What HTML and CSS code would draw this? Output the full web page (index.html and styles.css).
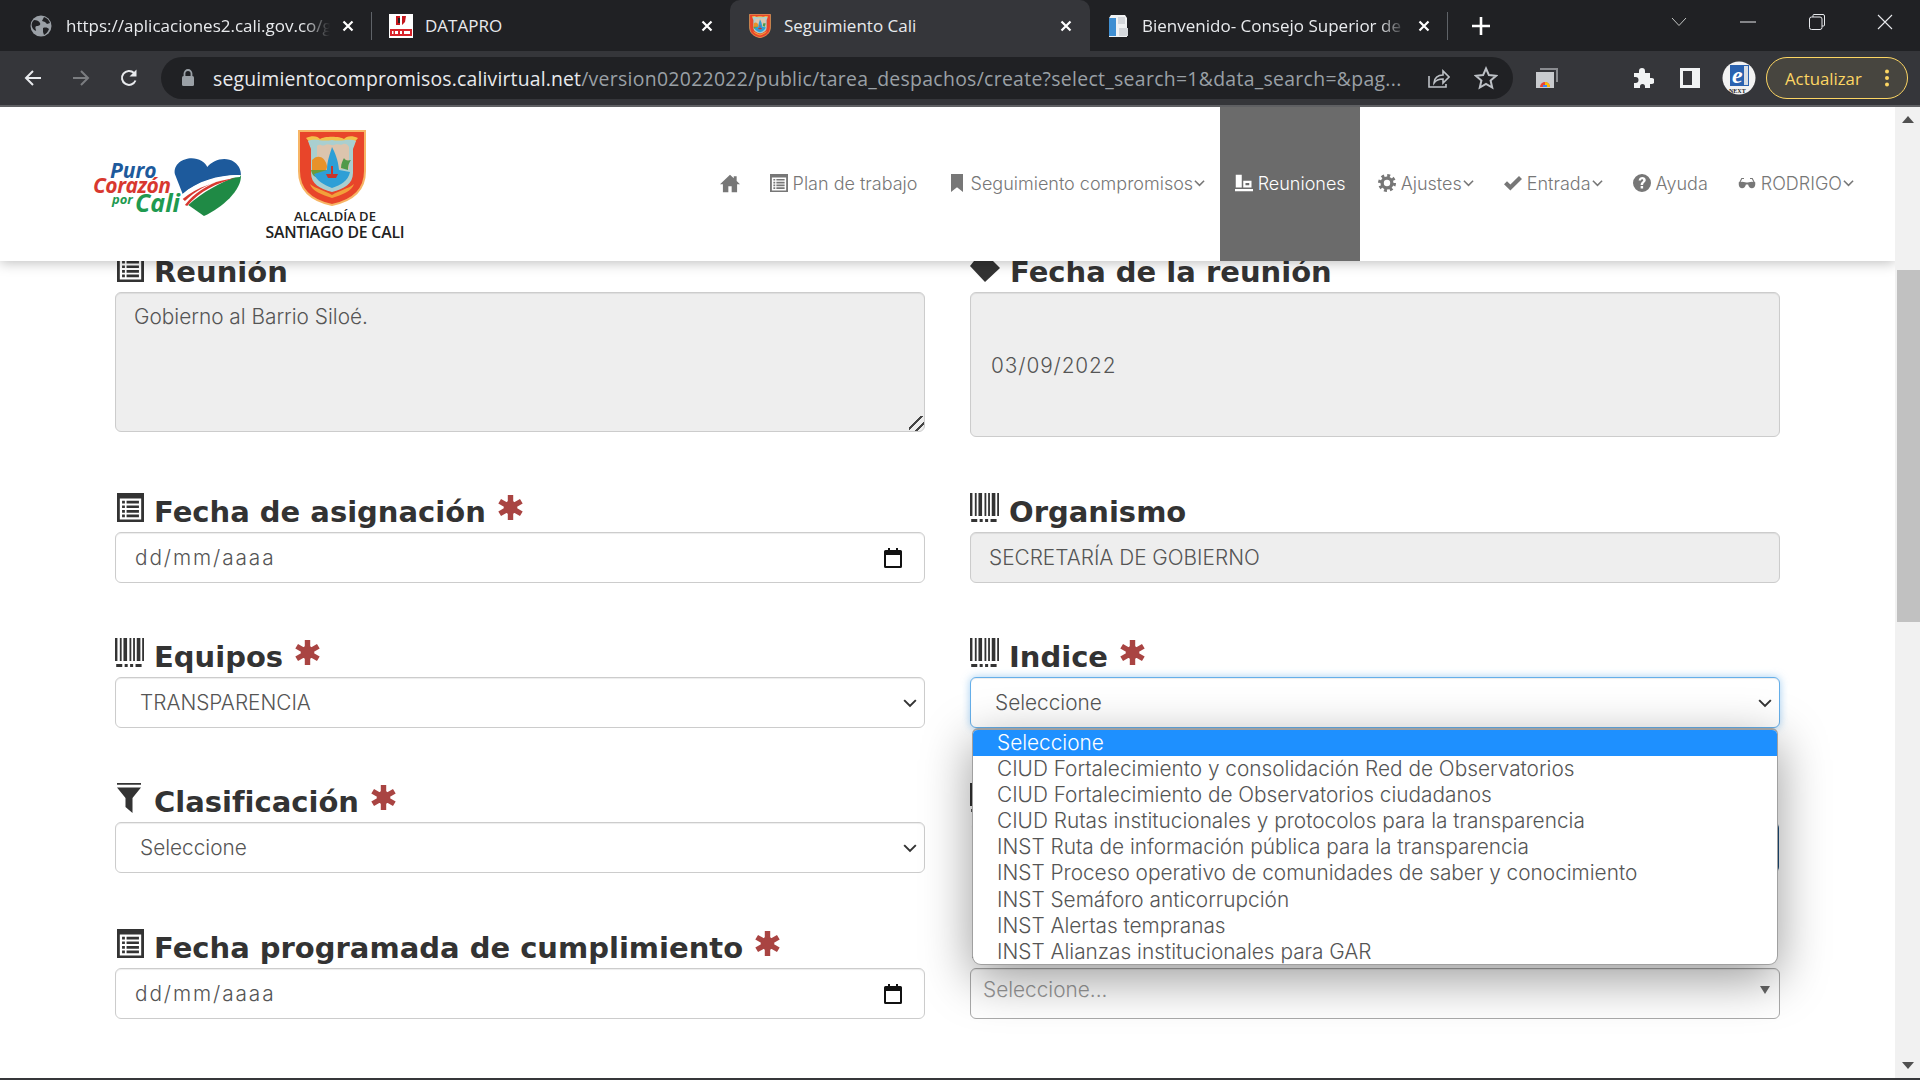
FILE: index.html
```html
<!DOCTYPE html>
<html lang="es">
<head>
    <meta charset="UTF-8">
    <title>Seguimiento Cali</title>
    <link rel="stylesheet" href="styles.css">
</head>
<body>

    <svg class="sprites" aria-hidden="true">
        <symbol id="i-home" viewBox="0 0 24 24"><path d="M12 2 0 13.5h3.5V23H10v-7h4v7h6.500v-9.500H24l-4-3.800V4h-3.500v2.300z"/></symbol>
        <symbol id="i-list" viewBox="0 0 24 24" preserveAspectRatio="none"><path fill-rule="evenodd" d="M0 0h24v24H0zM2.500 4.500V22h19V4.500z"/><path d="M4.500 6.500H7v2.200H4.500zM8.500 6.500h11v2.200h-11zM4.500 10.300H7v2.200H4.500zM8.500 10.300h11v2.200h-11zM4.500 14.100H7v2.200H4.500zM8.500 14.100h11v2.200h-11zM4.500 17.800H7V20H4.500zM8.500 17.800h11V20h-11z"/></symbol>
        <symbol id="i-barcode" viewBox="0 0 24 24"><path d="M0 0h2v19H0zM4 0h1.500v19H4zM7 0h3v19H7zM12 0h1.500v19H12zM15 0h1.500v19H15zM18 0h3v19h-3zM22.500 0H24v19h-1.500zM1 21.500h5V24H1zM8 21.500h2.500V24H8zM12.500 21.500H15V24h-2.500zM17 21.500h5V24h-5z"/></symbol>
        <symbol id="i-filter" viewBox="0 0 24 30"><path d="M0 0h24v1.800H0zM0 4.500h24l-8.500 10.500v15l-7-6v-9z"/></symbol>
        <symbol id="i-tag" viewBox="0 0 30 24"><path d="M0 8 8-2h10l12 12-15 14z"/></symbol>
        <symbol id="i-bookmark" viewBox="0 0 24 24"><path d="M4 0h16v24l-8-6.500L4 24z"/></symbol>
        <symbol id="i-meeting" viewBox="0 0 24 24"><path fill-rule="evenodd" d="M1 1h8v17H1zM11 9h11v9H11zM14 12v3h5v-3zM0 20h24v3H0z"/></symbol>
        <symbol id="i-cog" viewBox="0 0 24 24"><circle cx="12" cy="12" r="6.500" fill="none" stroke="currentColor" stroke-width="4.500"/><circle cx="12" cy="12" r="10" fill="none" stroke="currentColor" stroke-width="4" stroke-dasharray="3.900 3.950"/></symbol>
        <symbol id="i-ok" viewBox="0 0 24 24"><path d="M0 13.500 4 9.500l4.500 4.500L20 2.500l4 4L8.500 22z"/></symbol>
        <symbol id="i-help" viewBox="0 0 24 24"><path fill-rule="evenodd" d="M12 0a12 12 0 1 0 0 24 12 12 0 0 0 0-24zM7.500 8.500C8 2.500 17 2.700 17 8c0 3.500-3.500 3.500-3.500 6.500h-3.300c0-4 3.400-4.400 3.400-6.300 0-1.900-2.900-1.900-3.100.6zM10.200 16h3.300v3.300h-3.300z"/></symbol>
        <symbol id="i-glasses" viewBox="0 0 24 24"><path d="M1 11c3-1 6-1 8.500 0 1.500.6 3.500.6 5 0 2.500-1 5.500-1 8.500 0v3c0 3-2 5-4.500 5S14 17 13.500 14h-3C10 17 8 19 5.500 19S1 17 1 14z"/><path d="M2 12 5 6h3M22 12l-3-6h-3" fill="none" stroke="currentColor" stroke-width="1.500"/></symbol>
        <symbol id="i-star" viewBox="0 0 24 24"><g stroke="currentColor" stroke-width="5.200" stroke-linecap="butt"><path d="M12 0v24M1.600 6 22.400 18M22.400 6 1.600 18"/></g><circle cx="12" cy="12" r="6.500" fill="currentColor"/></symbol>
        <symbol id="i-calendar" viewBox="0 0 18 20"><path fill-rule="evenodd" d="M4 0h2v2h6V0h2v2h2.500A1.500 1.500 0 0 1 18 3.500v15a1.500 1.500 0 0 1-1.500 1.500h-15A1.500 1.500 0 0 1 0 18.500v-15A1.500 1.500 0 0 1 1.500 2H4zM2 7v11h14V7z"/></symbol>
        <symbol id="i-chevron" viewBox="0 0 12 8"><path d="M1 1.500 6 6.500l5-5" fill="none" stroke="currentColor" stroke-width="1.700"/></symbol>
        <symbol id="i-close" viewBox="0 0 12 12"><path d="M1.500 1.500l9 9M10.500 1.500l-9 9" fill="none" stroke="currentColor" stroke-width="2.200"/></symbol>
        <symbol id="i-shield" viewBox="0 0 68 76">
            <path d="M1 1h66v40c0 20-14 30-33 34C15 71 1 61 1 41z" fill="#e8452a" stroke="#f7b565" stroke-width="2"/>
            <path d="M8 8c6-3 12-2 14 1 4-3 20-3 24 0 2-3 8-4 14-1-3 3-4 6-4 9l-44 0c0-3-1-6-4-9z" fill="#f3c04a"/>
            <path d="M10 11c8-3 13 1 24-1 11 2 16-2 24 1l-3 8v24c0 11-9 16-21 19-12-3-21-8-21-19V19z" fill="#a9cfd0"/>
            <path d="M19 16c3-3 5 1 8-1 4-2 6 1 9 0 4-2 7 1 9-1 3-1 5 1 6 3v22H19z" fill="#dcc4ad"/>
            <path d="M14 30c5-6 13-4 15 6 0 6-5 9-15 7z" fill="#e8922a"/>
            <path d="M13 40h17c-1 6-4 8-8 8s-8-2-9-8z" fill="#6b9a3a"/>
            <path d="M43 38c0-5 2-8 3-10 1 2 3 3 7 2-2 3-3 5-3 10z" fill="#4f9a4a"/>
            <path d="M34 17c3 6 6 12 7 23l11 2c-2 9-9 13-18 16-8-3-15-7-18-14l13-4c0-9 3-16 5-23z" fill="#2d9fd6"/>
            <path d="M28 44h12l-2 4h-8zM33 36h2v8h-2z" fill="#c8352a"/>
            <path d="M12 54c6 5 14 6 22 11 8-5 16-6 22-11-2 7-12 11-22 14-10-3-20-7-22-14z" fill="#f2a03a"/>
        </symbol>
    </svg>

    <div class="tab-strip">
        <div class="tab tab-one">
            <svg class="favicon" viewBox="0 0 22 22"><circle cx="11" cy="11" r="10.500" fill="#9aa0a6"/><path d="M4 5c3 0 5 1 6 3s-1 3-3 3-2 2-1 4-3 0-4-3 0-5 2-7zM14 2c3 1 5 3 6 6l-3 1-2-2-3-1zM13 13c3-1 5 0 6 1-1 3-3 5-5 6l-1-3z" fill="#202124"/></svg>
            <span class="tab-title tab-title-fade">https://aplicaciones2.cali.gov.co/g</span>
            <svg class="tab-close"><use href="#i-close"/></svg>
        </div>
        <div class="tab-sep"></div>
        <div class="tab tab-two">
            <svg class="favicon" viewBox="0 0 24 24"><path d="M0 0h24v24H0z" fill="#fff"/><path d="M7 2h4v9H7zM13 2h4l-1 6-3 3z" fill="#c4161c"/><path d="M9 4h2v5H9z" fill="#222"/><path d="M1 15h22v7H1z" fill="#d8232a"/><path d="M3 17h1.500v3H3zM6 17h3v3H6zM11 17h2v3h-2zM15 17h6v3h-6z" fill="#fff"/></svg>
            <span class="tab-title">DATAPRO</span>
            <svg class="tab-close"><use href="#i-close"/></svg>
        </div>
        <div class="tab tab-active">
            <svg class="favicon"><use href="#i-shield"/></svg>
            <span class="tab-title">Seguimiento Cali</span>
            <svg class="tab-close"><use href="#i-close"/></svg>
        </div>
        <div class="tab tab-four">
            <svg class="favicon" viewBox="0 0 24 24"><path d="M5 1h14l2 3v19H3V4z" fill="#f1f3f4"/><path d="M3 4h7v18H3z" fill="#3f8fd2"/><path d="M12 3h7v7h-7zM13 14h9v8h-9z" fill="#d5d8dc"/></svg>
            <span class="tab-title tab-title-fade">Bienvenido- Consejo Superior de</span>
            <svg class="tab-close"><use href="#i-close"/></svg>
        </div>
        <div class="tab-sep"></div>
        <svg class="new-tab" viewBox="0 0 18 18"><path d="M9 0v18M0 9h18" stroke="#fff" stroke-width="2.600"/></svg>
        <div class="window-controls">
            <svg viewBox="0 0 16 10" class="win-chevron"><path d="M1 1l7 7.500L15 1" fill="none" stroke="#c4c7c5" stroke-width="1"/></svg>
            <svg viewBox="0 0 16 16" class="win-min"><path d="M0 8h16" stroke="#e8eaed" stroke-width="1"/></svg>
            <svg viewBox="0 0 16 16" class="win-max"><path d="M4 3V1.500A1 1 0 0 1 5 .500h9a1.500 1.500 0 0 1 1.500 1.500v9a1 1 0 0 1-1 1H13" fill="none" stroke="#e8eaed"/><rect x=".5" y="3" width="12.500" height="12.500" rx="2" fill="none" stroke="#e8eaed"/></svg>
            <svg viewBox="0 0 16 16" class="win-close"><path d="M1 1l14 14M15 1 1 15" stroke="#e8eaed" stroke-width="1.100"/></svg>
        </div>
    </div>

    <div class="toolbar">
        <svg class="nav-btn" viewBox="0 0 20 20"><path d="M18 10H3M10 3l-7 7 7 7" fill="none" stroke="#e8eaed" stroke-width="2"/></svg>
        <svg class="nav-btn" viewBox="0 0 20 20"><path d="M2 10h15M10 3l7 7-7 7" fill="none" stroke="#7b7d80" stroke-width="2"/></svg>
        <svg class="nav-btn" viewBox="0 0 20 20"><path d="M16.500 12.500A7 7 0 1 1 15 5" fill="none" stroke="#e8eaed" stroke-width="2"/><path d="M17.500 1.500v7h-7z" fill="#e8eaed"/></svg>
        <div class="omnibox">
            <svg class="lock" viewBox="0 0 14 18"><path d="M3.500 7V4.500a3.500 3.500 0 0 1 7 0V7" fill="none" stroke="#9aa0a6" stroke-width="1.800"/><rect x="1" y="7" width="12" height="10" rx="1.500" fill="#9aa0a6"/></svg>
            <div class="url"><span class="url-host">seguimientocompromisos.calivirtual.net</span>/version02022022/public/tarea_despachos/create?select_search=1&amp;data_search=&amp;pag...</div>
            <svg class="omni-icon omni-share" viewBox="0 0 24 24"><path d="M3 10v11h17v-3M8 17c0-5 4-8 9-8V5l6 6-6 6v-4c-4 0-7 1-9 4z" fill="none" stroke="#bdc1c6" stroke-width="1.600"/></svg>
            <svg class="omni-icon omni-star" viewBox="0 0 24 24"><path d="M12 2.500l2.900 6.600 7.100.7-5.400 4.700 1.600 7-6.200-3.700-6.200 3.700 1.600-7L2 9.800l7.100-.7z" fill="none" stroke="#bdc1c6" stroke-width="2"/></svg>
        </div>
        <svg class="ext-cast" viewBox="0 0 22 20"><path d="M4 0h18v14h-2V2H4z" fill="#8a8c90"/><path d="M0 4h18v16H0z" fill="#c9cbce"/><path d="M4 19a5 5 0 0 1 10 0z" fill="#ea4335"/><path d="M9 14a5 5 0 0 1 5 5h-3a2 2 0 0 0-2-2z" fill="#fbbc05"/><path d="M7 19h4v-2H7z" fill="#4285f4"/></svg>
        <svg class="ext-puzzle" viewBox="0 0 22 22"><path d="M2 6h5V4a3 3 0 0 1 6 0v2h5v5h1.500a3 3 0 0 1 0 6H18v4h-5v-1.500a2.500 2.500 0 0 0-5 0V21H2v-5h1.500a3 3 0 0 0 0-6H2z" fill="#f1f3f4"/></svg>
        <svg class="ext-panel" viewBox="0 0 20 20"><path fill-rule="evenodd" d="M0 0h20v20H0zM3 3v14h9V3z" fill="#f1f3f4"/></svg>
        <svg class="profile" viewBox="0 0 34 34">
            <circle cx="17" cy="17" r="16.500" fill="#f2f2f2"/>
            <path d="M8 4h19v21H8z" fill="#2a62b0"/>
            <path d="M22 5h4v19h-4z" fill="#d8dde4"/>
            <text class="profile-e" x="10" y="22">e</text>
            <text class="profile-next" x="7" y="31.500">NEXT</text>
        </svg>
        <div class="update-btn">
            <span>Actualizar</span>
            <svg class="update-dots" viewBox="0 0 4 18"><circle cx="2" cy="2.500" r="2"/><circle cx="2" cy="9" r="2"/><circle cx="2" cy="15.500" r="2"/></svg>
        </div>
    </div>

    <div class="page">
        <div class="viewport">
            <header class="site-header">
                <svg class="logo-heart" viewBox="0 0 148 60">
                    <g transform="translate(-10 0) scale(1.120 1)">
                        <path d="M82 17C80 4 96-3 106 4c3 2 4 4 5 6 5-7 16-11 24-5 5 4 6 9 6 13-16-1-39 5-52 19z" fill="#1d5a9c"/>
                        <path d="M141 18c1 15-17 33-33 41L94 48c12-12 28-23 47-30z" fill="#1f8a45"/>
                        <path d="M88 38c14-14 36-20 53-20l-1 2c-18 1-37 8-50 20z" fill="#fff"/>
                        <path d="M89 42c13-12 30-18 47-21-16 5-32 13-43 28l-2-1c8-12 20-20 33-25-12 4-24 11-33 21z" fill="#d8382f"/>
                    </g>
                    <text class="logo-puro" x="17" y="21">Puro</text>
                    <text class="logo-corazon" x="0" y="36">Corazón</text>
                    <text class="logo-por" x="19" y="47">por</text>
                    <text class="logo-cali" x="42" y="55">Cali</text>
                </svg>
                <div class="logo-alcaldia">
                    <svg class="shield"><use href="#i-shield"/></svg>
                    <div class="alcaldia-top">ALCALDÍA DE</div>
                    <div class="alcaldia-bottom">SANTIAGO DE CALI</div>
                </div>
                <nav class="main-nav">
                    <a class="nav-home"><svg class="nav-icon"><use href="#i-home"/></svg></a>
                    <a class="nav-plan"><svg class="nav-icon"><use href="#i-list"/></svg>Plan de trabajo</a>
                    <a class="nav-seg"><svg class="nav-icon"><use href="#i-bookmark"/></svg>Seguimiento compromisos<svg class="nav-caret"><use href="#i-chevron"/></svg></a>
                    <a class="nav-active"><svg class="nav-icon"><use href="#i-meeting"/></svg>Reuniones</a>
                    <a class="nav-ajustes"><svg class="nav-icon"><use href="#i-cog"/></svg>Ajustes<svg class="nav-caret"><use href="#i-chevron"/></svg></a>
                    <a class="nav-entrada"><svg class="nav-icon"><use href="#i-ok"/></svg>Entrada<svg class="nav-caret"><use href="#i-chevron"/></svg></a>
                    <a class="nav-ayuda"><svg class="nav-icon"><use href="#i-help"/></svg>Ayuda</a>
                    <a class="nav-user"><svg class="nav-icon"><use href="#i-glasses"/></svg>RODRIGO<svg class="nav-caret"><use href="#i-chevron"/></svg></a>
                </nav>
            </header>

            <form class="task-form">
                <div class="field">
                    <label class="field-label"><svg class="label-icon label-list"><use href="#i-list"/></svg>Reunión</label>
                    <textarea class="control control-locked control-area" readonly>Gobierno al Barrio Siloé.</textarea>
                </div>
                <div class="field">
                    <label class="field-label"><svg class="label-icon label-tag"><use href="#i-tag"/></svg>Fecha de la reunión</label>
                    <div class="control control-locked control-tall">03/09/2022</div>
                </div>

                <div class="field">
                    <label class="field-label"><svg class="label-icon label-list"><use href="#i-list"/></svg>Fecha de asignación <svg class="req"><use href="#i-star"/></svg></label>
                    <div class="control control-date">dd/mm/aaaa<svg class="cal-icon"><use href="#i-calendar"/></svg></div>
                </div>
                <div class="field">
                    <label class="field-label"><svg class="label-icon"><use href="#i-barcode"/></svg>Organismo</label>
                    <div class="control control-locked control-line">SECRETARÍA DE GOBIERNO</div>
                </div>

                <div class="field">
                    <label class="field-label"><svg class="label-icon"><use href="#i-barcode"/></svg>Equipos <svg class="req"><use href="#i-star"/></svg></label>
                    <div class="select-wrap">
                        <select class="control control-select"><option>TRANSPARENCIA</option></select>
                        <svg class="select-arrow"><use href="#i-chevron"/></svg>
                    </div>
                </div>
                <div class="field">
                    <label class="field-label"><svg class="label-icon"><use href="#i-barcode"/></svg>Indice <svg class="req"><use href="#i-star"/></svg></label>
                    <div class="select-wrap">
                        <select class="control control-select control-focus"><option>Seleccione</option></select>
                        <svg class="select-arrow"><use href="#i-chevron"/></svg>
                    </div>
                    <ul class="dropdown">
                        <li class="dropdown-on">Seleccione</li>
                        <li>CIUD Fortalecimiento y consolidación Red de Observatorios</li>
                        <li>CIUD Fortalecimiento de Observatorios ciudadanos</li>
                        <li>CIUD Rutas institucionales y protocolos para la transparencia</li>
                        <li>INST Ruta de información pública para la transparencia</li>
                        <li>INST Proceso operativo de comunidades de saber y conocimiento</li>
                        <li>INST Semáforo anticorrupción</li>
                        <li>INST Alertas tempranas</li>
                        <li>INST Alianzas institucionales para GAR</li>
                    </ul>
                </div>

                <div class="field">
                    <label class="field-label"><svg class="label-icon label-filter"><use href="#i-filter"/></svg>Clasificación <svg class="req"><use href="#i-star"/></svg></label>
                    <div class="select-wrap">
                        <select class="control control-select"><option>Seleccione</option></select>
                        <svg class="select-arrow"><use href="#i-chevron"/></svg>
                    </div>
                </div>
                <div class="field">
                    <label class="field-label"><svg class="label-icon"><use href="#i-barcode"/></svg></label>
                    <div class="control control-blue"></div>
                </div>

                <div class="field">
                    <label class="field-label"><svg class="label-icon label-list"><use href="#i-list"/></svg>Fecha programada de cumplimiento <svg class="req"><use href="#i-star"/></svg></label>
                    <div class="control control-date">dd/mm/aaaa<svg class="cal-icon"><use href="#i-calendar"/></svg></div>
                </div>
                <div class="field">
                    <label class="field-label"><svg class="label-icon label-list"><use href="#i-list"/></svg></label>
                    <div class="control control-search">Seleccione...<span class="search-caret"></span></div>
                </div>

                <div class="field">
                    <label class="field-label"><svg class="label-icon label-tag"><use href="#i-tag"/></svg></label>
                </div>
            </form>
        </div>
        <div class="scrollbar">
            <span class="scroll-arrow scroll-up"></span>
            <div class="scroll-track"><div class="scroll-thumb"></div></div>
            <span class="scroll-arrow scroll-down"></span>
        </div>
    </div>
    <div class="taskbar-edge"></div>

</body>
</html>
```

FILE: styles.css
```css
html, body {
    margin: 0;
    height: 1080px;
    overflow: hidden;
    background-color: #fff;
}
body {
    font-family: "Inter", "Liberation Sans", sans-serif;
    font-weight: 300;
    color: #555;
    display: flex;
    flex-direction: column;
}
.sprites {
    display: none;
}

/* browser chrome */
.tab-strip {
    height: 51px;
    flex: none;
    display: flex;
    align-items: center;
    background-color: #202124;
    font-family: "Open Sans", sans-serif;
    font-weight: 400;
    font-size: 17px;
    color: #e8eaed;
}
.tab {
    height: 51px;
    box-sizing: border-box;
    display: flex;
    align-items: center;
    flex: none;
}
.tab-one {
    width: 371px;
    padding: 0 17px 0 30px;
}
.tab-two {
    width: 358px;
    padding: 0 17px 0 17px;
}
.tab-active {
    width: 360px;
    padding: 0 18px 0 18px;
    background-color: #35363a;
    border-radius: 10px 10px 0 0;
}
.tab-four {
    width: 357px;
    padding: 0 17px 0 16px;
}
.favicon {
    width: 24px;
    height: 24px;
    flex: none;
    margin-right: 12px;
}
.tab-one .favicon {
    width: 22px;
    height: 22px;
    margin-right: 14px;
}
.tab-title {
    flex: 1;
    overflow: hidden;
    white-space: nowrap;
}
.tab-title-fade {
    -webkit-mask-image: linear-gradient(to right, #000 90%, transparent);
    mask-image: linear-gradient(to right, #000 90%, transparent);
}
.tab-close {
    width: 12px;
    height: 12px;
    flex: none;
    margin-left: 12px;
    color: #fff;
}
.tab-sep {
    width: 1px;
    height: 28px;
    flex: none;
    background-color: #5f6368;
}
.new-tab {
    width: 18px;
    height: 18px;
    flex: none;
    margin-left: 24px;
}
.window-controls {
    margin-left: auto;
    height: 51px;
    display: flex;
    align-items: flex-start;
    padding-top: 14px;
    box-sizing: border-box;
}
.win-chevron {
    width: 16px;
    height: 10px;
    margin-top: 3px;
    margin-right: 53px;
}
.win-min {
    width: 16px;
    height: 16px;
    margin-right: 53px;
}
.win-max {
    width: 16px;
    height: 16px;
    margin-right: 52px;
}
.win-close {
    width: 16px;
    height: 16px;
    margin-right: 27px;
}

.toolbar {
    height: 56px;
    flex: none;
    box-sizing: border-box;
    border-bottom: 2px solid #5f6063;
    display: flex;
    align-items: center;
    background-color: #35363a;
}
.nav-btn {
    width: 20px;
    height: 20px;
    flex: none;
    margin-left: 23px;
    margin-right: 5px;
}
.omnibox {
    width: 1352px;
    height: 42px;
    margin-left: 17px;
    box-sizing: border-box;
    padding: 0 13px 0 20px;
    display: flex;
    align-items: center;
    background-color: #202124;
    border-radius: 21px;
    font-family: "Open Sans", sans-serif;
    font-weight: 400;
    font-size: 19.400px;
    letter-spacing: .31px;
    color: #9aa0a6;
}
.lock {
    width: 14px;
    height: 18px;
    flex: none;
    margin-right: 18px;
}
.url {
    width: 1190px;
    flex: none;
    overflow: hidden;
    white-space: nowrap;
}
.url-host {
    color: #e8eaed;
    letter-spacing: .17px;
}
.omni-icon {
    width: 24px;
    height: 24px;
    flex: none;
}
.omni-share {
    margin-left: 23px;
}
.omni-star {
    margin-left: 24px;
}
.ext-cast {
    width: 22px;
    height: 20px;
    flex: none;
    margin-left: 23px;
}
.ext-puzzle {
    width: 22px;
    height: 22px;
    flex: none;
    margin-left: 74px;
}
.ext-panel {
    width: 20px;
    height: 20px;
    flex: none;
    margin-left: 26px;
}
.profile {
    width: 34px;
    height: 34px;
    flex: none;
    margin-left: 22px;
    overflow: visible;
}
.profile-e {
    font-family: "Liberation Serif", serif;
    font-style: italic;
    font-weight: 700;
    font-size: 24px;
    fill: #fff;
}
.profile-next {
    font-family: "Liberation Serif", serif;
    font-weight: 700;
    font-size: 6px;
    fill: #222;
}
.update-btn {
    width: 142px;
    height: 42px;
    margin-left: 10px;
    box-sizing: border-box;
    display: flex;
    align-items: center;
    justify-content: space-between;
    padding: 0 18px;
    border: 1.500px solid #fdd663;
    border-radius: 21px;
    background-color: #47453f;
    font-family: "Open Sans", sans-serif;
    font-weight: 400;
    font-size: 16.800px;
    color: #fdd663;
}
.update-dots {
    width: 4px;
    height: 18px;
    fill: #fdd663;
}

/* page */
.page {
    flex: 1;
    display: flex;
    min-height: 0;
}
.viewport {
    flex: 1;
    min-width: 0;
    overflow: hidden;
}
.taskbar-edge {
    height: 2px;
    flex: none;
    background-color: #36373a;
}
.scrollbar {
    width: 25px;
    flex: none;
    background-color: #f1f1f1;
    display: flex;
    flex-direction: column;
    align-items: center;
}
.scroll-track {
    flex: 1;
    width: 100%;
    padding: 138px 0 0 2px;
    box-sizing: border-box;
}
.scroll-thumb {
    height: 352px;
    background-color: #c1c1c1;
}
.scroll-arrow {
    width: 0;
    height: 0;
    margin: 9px 0;
    border-left: 6px solid transparent;
    border-right: 6px solid transparent;
}
.scroll-up {
    border-bottom: 7px solid #505050;
}
.scroll-down {
    border-top: 7px solid #505050;
}

.site-header {
    height: 154px;
    display: flex;
    align-items: flex-start;
    position: relative;
    z-index: 2;
    background-color: #fff;
    box-shadow: 0 2px 12px rgba(0, 0, 0, .25);
}
.logo-heart {
    width: 148px;
    height: 60px;
    flex: none;
    margin: 50px 0 0 93px;
    overflow: visible;
}
.logo-puro, .logo-corazon, .logo-por, .logo-cali {
    font-family: "Open Sans", sans-serif;
    font-style: italic;
    font-weight: 700;
}
.logo-puro {
    font-size: 21px;
    fill: #1d5a9c;
}
.logo-corazon {
    font-size: 21px;
    letter-spacing: -.5px;
    fill: #d8382f;
}
.logo-por {
    font-size: 13px;
    fill: #1f9a50;
}
.logo-cali {
    font-size: 25px;
    fill: #1f9a50;
}
.logo-alcaldia {
    width: 140px;
    flex: none;
    margin: 23px 0 0 24px;
    display: flex;
    flex-direction: column;
    align-items: center;
    font-family: "Open Sans", sans-serif;
    font-weight: 600;
    color: #222;
    white-space: nowrap;
}
.shield {
    width: 68px;
    height: 76px;
    margin-left: -6px;
}
.alcaldia-top {
    margin-top: 3px;
    font-size: 13px;
    line-height: 15px;
}
.alcaldia-bottom {
    font-size: 15.800px;
    line-height: 16px;
    letter-spacing: -.2px;
}
.main-nav {
    height: 154px;
    margin-left: auto;
    margin-right: 26px;
    display: flex;
    align-items: center;
    font-size: 18px;
    color: #777;
}
.main-nav a {
    height: 154px;
    display: flex;
    align-items: center;
    box-sizing: border-box;
    padding: 0 15px 2px;
    white-space: nowrap;
}
.nav-icon {
    width: 18px;
    height: 18px;
    flex: none;
    margin-right: 5px;
    fill: currentColor;
    color: #777;
}
.nav-home .nav-icon {
    width: 20px;
    height: 20px;
    margin-right: 0;
}
.main-nav .nav-active {
    padding: 0 14.500px 2px;
    margin-right: 2.500px;
    background-color: #6b6b6b;
    color: #fff;
}
.nav-active .nav-icon {
    color: #fff;
}
.nav-caret {
    width: 11px;
    height: 8px;
    flex: none;
    margin-left: 1px;
}

.task-form {
    margin-top: -14px;
    padding-left: 115px;
    display: grid;
    grid-template-columns: 810px 810px;
    column-gap: 45px;
    align-items: start;
}
.field {
    position: relative;
    margin-bottom: 49.350px;
}
.field-label {
    height: 45px;
    box-sizing: border-box;
    padding-bottom: 4px;
    display: flex;
    align-items: flex-end;
    font-family: "DejaVu Sans", sans-serif;
    font-size: 29px;
    font-weight: 700;
    line-height: 32px;
    color: #333;
    white-space: pre;
}
.label-icon {
    width: 29px;
    height: 29px;
    flex: none;
    margin: 0 10px 6px 0;
    fill: #333;
}
.label-list {
    width: 27px;
    height: 29px;
    margin: 0 10px 6px 2px;
}
.label-tag {
    width: 30px;
    height: 24px;
    margin-left: 0;
}
.label-filter {
    width: 24px;
    height: 30px;
    margin: 0 13px 5px 2px;
}
.req {
    width: 25px;
    height: 25px;
    flex: none;
    margin: 0 0 8px 2px;
    color: #a94442;
}
.control {
    display: block;
    width: 100%;
    height: 51px;
    box-sizing: border-box;
    border: 1px solid #ccc;
    border-radius: 6px;
    background-color: #fff;
    font-family: "Inter", "Liberation Sans", sans-serif;
    font-weight: 300;
    font-size: 20.800px;
    color: #555;
    box-shadow: inset 0 1px 1px rgba(0, 0, 0, .075);
}
.control-locked {
    background-color: #eee;
}
.control-area {
    height: 140px;
    padding: 11px 18px;
    resize: vertical;
    outline: none;
}
.control-area::-webkit-resizer {
    background: linear-gradient(135deg, transparent 40%, #444 40%, #444 50%, transparent 50%, transparent 68%, #444 68%, #444 78%, transparent 78%);
}
.control-tall {
    height: 145.250px;
    padding: 60px 20px 0;
    letter-spacing: .9px;
}
.control-line {
    padding: 12px 18px;
}
.control-date {
    display: flex;
    align-items: center;
    justify-content: space-between;
    padding: 1px 22px 0 19px;
    letter-spacing: 1.900px;
}
.cal-icon {
    width: 18px;
    height: 20px;
    fill: #111;
}
.select-wrap {
    position: relative;
}
.control-select {
    appearance: none;
    padding: 0 24px;
}
.select-arrow {
    position: absolute;
    right: 8px;
    top: 21px;
    width: 14px;
    height: 10px;
    color: #333;
    pointer-events: none;
}
.control-focus {
    border-color: #66afe9;
    box-shadow: inset 0 1px 1px rgba(0, 0, 0, .075), 0 0 8px rgba(102, 175, 233, .6);
    outline: none;
}
.control-blue {
    background: linear-gradient(to right, #fff 90%, #1f4f7c 90%);
    border-color: #fff;
}
.control-search {
    position: relative;
    padding: 8px 12px;
    color: #999;
    border-color: #aaa;
}
.search-caret {
    position: absolute;
    right: 9px;
    top: 17px;
    border-top: 8px solid #666;
    border-left: 5px solid transparent;
    border-right: 5px solid transparent;
}
.dropdown {
    position: absolute;
    z-index: 1;
    top: 96px;
    left: 2px;
    right: 2px;
    height: 237px;
    margin: 0;
    padding: 0;
    box-sizing: border-box;
    list-style: none;
    overflow: hidden;
    background-color: #fff;
    border: 1px solid #a0a0a0;
    border-top-width: 2px;
    border-radius: 6px 6px 9px 9px;
    box-shadow: 0 14px 50px rgba(0, 0, 0, .4);
    font-size: 20.800px;
    line-height: 26.100px;
    color: #555;
}
.dropdown li {
    padding-left: 24px;
    white-space: nowrap;
}
.dropdown .dropdown-on {
    background-color: #1e90ff;
    color: #fff;
}
```
